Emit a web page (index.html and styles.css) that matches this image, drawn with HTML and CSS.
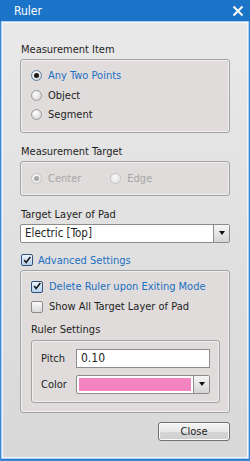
FILE: index.html
```html
<!DOCTYPE html>
<html lang="en">

<head>
  <meta charset="UTF-8">
  <title>Ruler</title>
  <link rel="stylesheet" href="styles.css">
</head>

<body>
  <div class="window">
    <div class="titlebar">
      <span class="title">Ruler</span>
      <svg class="close-x" width="12" height="12" viewBox="0 0 12 12">
        <path d="M1.5 1.5 L10.5 10.5 M10.5 1.5 L1.5 10.5" stroke="#fff" stroke-width="2" fill="none" />
      </svg>
    </div>

    <div class="content">
      <div class="label">Measurement Item</div>
      <div class="group group-item">
        <div class="row"><span class="radio checked"></span><span class="blue">Any Two Points</span></div>
        <div class="row"><span class="radio"></span><span>Object</span></div>
        <div class="row"><span class="radio"></span><span>Segment</span></div>
      </div>

      <div class="label gap">Measurement Target</div>
      <div class="group group-target">
        <div class="row disabled"><span class="radio checked"></span><span>Center</span></div>
        <div class="row disabled"><span class="radio"></span><span>Edge</span></div>
      </div>

      <div class="label gap">Target Layer of Pad</div>
      <div class="combo">
        <div class="combo-value">Electric [Top]</div>
        <div class="combo-btn"><span class="arrow"></span></div>
      </div>

      <div class="row check-row">
        <span class="checkbox checked">
          <svg width="12" height="12" viewBox="0 0 12 12"><path d="M2.5 6 L5 9 L10 2.5" stroke="#1a1a1a" stroke-width="2" fill="none" /></svg>
        </span>
        <span class="blue">Advanced Settings</span>
      </div>

      <div class="group group-adv">
        <div class="row"><span class="checkbox checked">
            <svg width="12" height="12" viewBox="0 0 12 12"><path d="M2.5 6 L5 9 L10 2.5" stroke="#1a1a1a" stroke-width="2" fill="none" /></svg>
          </span><span class="blue">Delete Ruler upon Exiting Mode</span></div>
        <div class="row"><span class="checkbox"></span><span>Show All Target Layer of Pad</span></div>
        <div class="label sub">Ruler Settings</div>
        <div class="group group-ruler">
          <div class="field">
            <span class="field-name">Pitch</span>
            <div class="textbox">0.10</div>
          </div>
          <div class="field">
            <span class="field-name">Color</span>
            <div class="combo color-combo">
              <div class="swatch"></div>
              <div class="combo-btn"><span class="arrow"></span></div>
            </div>
          </div>
        </div>
      </div>

      <div class="buttons">
        <button type="button" class="btn">Close</button>
      </div>
    </div>
  </div>
</body>

</html>
```

FILE: styles.css
```css
* {
  box-sizing: border-box;
}

body {
  margin: 0;
  font-family: "DejaVu Sans Condensed", "DejaVu Sans", sans-serif;
  font-stretch: condensed;
  font-size: 11px;
  color: #1e1e1e;
  white-space: nowrap;
}

.window {
  width: 250px;
  height: 461px;
  display: flex;
  flex-direction: column;
  background-color: #2a7ed0;
  border: 1px solid #3a88d6;
  border-top: none;
}

.titlebar {
  height: 22px;
  display: flex;
  align-items: center;
  justify-content: space-between;
  padding: 0 3px 0 14px;
  background-color: #1b74c8;
  margin: 0 -1px;
}

.title {
  color: #fff;
  font-size: 12px;
}

.close-x {
  margin-right: 3px;
}

.content {
  flex: 1;
  margin: 0 1px 2px 1px;
  border: 1px solid #f4f6f8;
  outline: 1px solid #a8cdf0;
  background: linear-gradient(#e9e9e9, #d8d8d8);
  padding: 20px 17px 0 17px;
  display: flex;
  flex-direction: column;
}

.label {
  height: 14px;
  line-height: 14px;
  padding-left: 1px;
  margin-bottom: 2px;
}

.label.gap {
  margin-top: 12px;
}

.group {
  border: 1px solid #a2a2a2;
  border-radius: 3px;
  background-color: #e0dcdb;
  box-shadow: inset 0 0 0 1px #f0eeee;
}

.group-item {
  padding: 6px 10px 7px;
}

.group-target {
  height: 35px;
  padding: 0 10px;
  display: flex;
  align-items: center;
  gap: 29px;
}

.row {
  height: 19.5px;
  display: flex;
  align-items: center;
  gap: 6px;
}

.blue {
  color: #1b6fc2;
}

.disabled {
  color: #a6a6a6;
}

.radio {
  width: 11px;
  height: 11px;
  border-radius: 50%;
  border: 1px solid #9b9b9b;
  background: radial-gradient(circle at 40% 35%, #ffffff, #dcdcdc 70%, #c8c8c8);
  display: flex;
  align-items: center;
  justify-content: center;
}

.radio.checked {
  border-color: #5e7f9e;
}

.radio.checked::after {
  content: "";
  width: 5px;
  height: 5px;
  border-radius: 50%;
  background-color: #1a1a1a;
}

.disabled .radio {
  border-color: #c4c4c4;
  background: radial-gradient(circle at 40% 35%, #f6f6f6, #e2e2e2);
}

.disabled .radio.checked::after {
  background-color: #a9a9a9;
}

.combo {
  height: 19px;
  display: flex;
  border: 1px solid #8c8c8c;
  border-radius: 2px;
  background-color: #fff;
}

.combo-value {
  flex: 1;
  padding-left: 4px;
  line-height: 17px;
  font-size: 11.5px;
}

.combo-btn {
  width: 16px;
  border-left: 1px solid #8c8c8c;
  background: linear-gradient(#f6f6f6, #d4d4d4);
  display: flex;
  align-items: center;
  justify-content: center;
}

.arrow {
  width: 0;
  height: 0;
  border-left: 3.5px solid transparent;
  border-right: 3.5px solid transparent;
  border-top: 4px solid #111;
}

.check-row {
  margin-top: 8px;
  height: 19px;
  padding-left: 1px;
  gap: 5px;
}

.checkbox {
  width: 12px;
  height: 12px;
  border: 1px solid #8a8a8a;
  border-radius: 2px;
  background: linear-gradient(#fafafa, #d9d9d9);
  display: flex;
  align-items: center;
  justify-content: center;
}

.checkbox.checked {
  border-color: #31507a;
  background: linear-gradient(#eaf3fc, #b7d2ee);
}

.checkbox svg {
  margin-top: -1px;
}

.group-adv {
  padding: 6px 9px 9px 10px;
}

.group-adv .row {
  height: 20px;
  gap: 6px;
}

.label.sub {
  margin-top: 6px;
  padding-left: 0;
  margin-bottom: 3px;
}

.group-ruler {
  padding: 8px 9px 8px 8px;
  display: flex;
  flex-direction: column;
  gap: 7px;
}

.field {
  display: flex;
  align-items: center;
}

.field-name {
  width: 36px;
  padding-left: 1px;
}

.textbox {
  flex: 1;
  height: 19px;
  border: 1px solid #8c8c8c;
  background-color: #fff;
  padding-left: 4px;
  line-height: 17px;
  font-size: 12px;
}

.color-combo {
  flex: 1;
}

.swatch {
  flex: 1;
  margin: 2px;
  background-color: #f484c0;
}

.buttons {
  display: flex;
  justify-content: flex-end;
  margin-top: 9px;
}

.btn {
  width: 72px;
  height: 19px;
  font-family: inherit;
  font-size: 11px;
  color: #1e1e1e;
  border: 1px solid #707070;
  border-radius: 3px;
  background: linear-gradient(#f4f4f4 0%, #e8e8e8 50%, #d6d6d6 51%, #cfcfcf 100%);
  box-shadow: inset 0 0 0 1px #fbfbfb;
  padding: 0;
}
```
